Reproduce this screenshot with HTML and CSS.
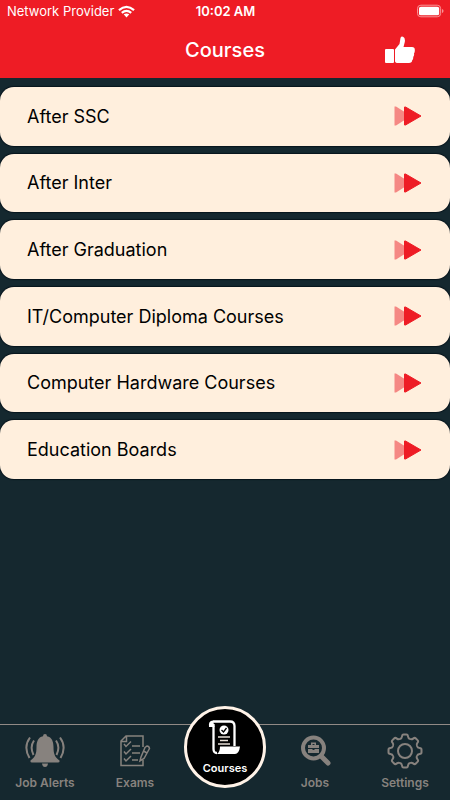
FILE: index.html
```html
<!DOCTYPE html>
<html lang="en">
<head>
<meta charset="utf-8">
<meta name="viewport" content="width=device-width, initial-scale=1">
<title>Courses</title>
<link rel="stylesheet" href="styles.css">
</head>
<body>
<svg class="defs" aria-hidden="true">
  <symbol id="forward" viewBox="0 0 28 20">
    <path d="M0.500 0.500H2L17 10 2 19.500H0.500z" fill="#f58884"/>
    <path d="M10.500 1H11.500L27 10 11.500 19H10.500z" fill="#ee1c25" stroke="#ee1c25" stroke-linejoin="round"/>
  </symbol>
</svg>
<header class="top">
  <div class="status">
    <div class="carrier">
      <span>Network Provider</span>
      <svg class="wifi" viewBox="0 0 18 13" aria-hidden="true">
        <g fill="none" stroke="#fff" stroke-width="2.300">
          <path d="M1 5Q9-2 17 5"/>
          <path d="M4 8Q9 3.500 14 8"/>
        </g>
        <path d="M6 9.500Q9 7.500 12 9.500L9 12.800z" fill="#fff"/>
      </svg>
    </div>
    <time class="clock">10:02 AM</time>
    <svg class="battery" viewBox="0 0 28 14" aria-hidden="true">
      <rect x="0.500" y="1" width="24" height="12" rx="3.500" fill="none" stroke="#f99a9c" />
      <rect x="2" y="2.500" width="21" height="9" rx="2" fill="#fff"/>
      <path d="M26 5q1.500.5 1.500 2T26 9z" fill="#f99a9c"/>
    </svg>
  </div>
  <div class="bar">
    <h1>Courses</h1>
    <button class="like" type="button" aria-label="Like">
      <svg viewBox="0 0 30 28" aria-hidden="true">
        <rect x="0" y="13" width="9" height="14" rx="1" fill="#fff"/>
        <path d="M10 13.500L14.500 8 15.500 2Q16-.3 18 .8 20.500 2 19.800 6L18.500 11H27Q30 11.300 29.800 14 30 16 29 17.500 29.500 19.500 28.200 21 28.500 23 27.200 24.300 27 27 24 27H13Q10 27 10 25z" fill="#fff"/>
      </svg>
    </button>
  </div>
</header>
<main>
  <ul class="courses">
    <li><a href="#ssc">After SSC<svg aria-hidden="true"><use href="#forward"/></svg></a></li>
    <li><a href="#inter">After Inter<svg aria-hidden="true"><use href="#forward"/></svg></a></li>
    <li><a href="#graduation">After Graduation<svg aria-hidden="true"><use href="#forward"/></svg></a></li>
    <li><a href="#diploma">IT/Computer Diploma Courses<svg aria-hidden="true"><use href="#forward"/></svg></a></li>
    <li><a href="#hardware">Computer Hardware Courses<svg aria-hidden="true"><use href="#forward"/></svg></a></li>
    <li><a href="#boards">Education Boards<svg aria-hidden="true"><use href="#forward"/></svg></a></li>
  </ul>
</main>
<nav class="tabs">
  <a href="#alerts">
    <svg viewBox="0 0 40 36" aria-hidden="true">
      <path d="M20 1Q22 1 22 3.200C27 4 28.500 9 28.500 14 28.500 21 30 24.500 34.500 27.500Q35 29.500 33 29.500H7Q5 29.500 5.500 27.500C10 24.500 11.500 21 11.500 14 11.500 9 13 4 18 3.200Q18 1 20 1zM17 30.500H23Q22.500 34 20 34T17 30.500z" fill="currentColor"/>
      <path d="M9 7.500Q4.500 14 8.500 22M5 4.500Q-2 14 4.500 25M31 7.500Q35.500 14 31.500 22M35 4.500Q42 14 35.500 25" fill="none" stroke="currentColor" stroke-width="2"/>
    </svg>
    <span>Job Alerts</span>
  </a>
  <a href="#exams">
    <svg viewBox="0 0 40 36" aria-hidden="true">
      <g fill="none" stroke="currentColor" stroke-width="1.500">
        <path d="M28 14V3H11L6 8V32.500H28V27M6 8.500H11.500V3"/>
        <path d="M9 11l2 2.500 5-5M9 18.500l2 2.500 5-5M9 25.500l2 2.500 5-5M17 13H25M17 20H25M17 27H23"/>
        <path d="M30 14.500L26 24 25 28 29 25.500 34.500 15.500Q34 13 32 13zM28.500 18L32 20"/>
      </g>
    </svg>
    <span>Exams</span>
  </a>
  <a class="current" href="#courses" aria-current="page">
    <svg viewBox="0 0 34 36" aria-hidden="true">
      <path d="M5 2.500H22Q26.500 2.500 26.500 7V27M5.500 5V30Q5.500 34 9 34" fill="none" stroke="#fff" stroke-width="2.300"/>
      <path d="M12 27.500H32Q31 35 27 35H9Q12 33 12 27.500zM1 8Q0 1.500 5 1.500L6.500 8z" fill="#fff"/>
      <circle cx="16" cy="11" r="4.500" fill="#fff"/>
      <path d="M13.500 11l2 2 3-4" fill="none" stroke="#000" stroke-width="1.300"/>
      <path d="M10 18H22M12 21.500H20M10 25H22" stroke="#e8e0d8" stroke-width="1.600"/>
    </svg>
    <span>Courses</span>
  </a>
  <a href="#jobs">
    <svg viewBox="0 0 40 36" aria-hidden="true">
      <circle cx="18.500" cy="15" r="10.500" fill="none" stroke="currentColor" stroke-width="4"/>
      <path d="M26 23L33 30" stroke="currentColor" stroke-width="5" stroke-linecap="round"/>
      <path d="M13 12H16V9.500H21V12H24V15H13zM13 16H17.500V17H19.500V16H24V20H13zM17.500 11V12H19.500V11z" fill="currentColor" fill-rule="evenodd"/>
    </svg>
    <span>Jobs</span>
  </a>
  <a href="#settings">
    <svg viewBox="-20 -18 40 36" aria-hidden="true">
      <g fill="none" stroke="currentColor" stroke-width="2">
        <circle r="7"/>
        <path id="tooth" d="M-5-12Q-3.200-12.600-3-14.500-2.800-16.500-1.500-16.500H1.500Q2.800-16.500 3-14.500 3.200-12.600 5-12"/>
        <use href="#tooth" transform="rotate(45)"/>
        <use href="#tooth" transform="rotate(90)"/>
        <use href="#tooth" transform="rotate(135)"/>
        <use href="#tooth" transform="rotate(180)"/>
        <use href="#tooth" transform="rotate(225)"/>
        <use href="#tooth" transform="rotate(270)"/>
        <use href="#tooth" transform="rotate(315)"/>
      </g>
    </svg>
    <span>Settings</span>
  </a>
</nav>
</body>
</html>
```
FILE: styles.css
```css
* {
  box-sizing: border-box;
}

body {
  margin: 0;
  min-height: 100vh;
  display: flex;
  flex-direction: column;
  background: #15282f;
  color: #000;
  font-family: Inter, "Liberation Sans", sans-serif;
}

svg {
  display: block;
}

a {
  color: inherit;
  text-decoration: none;
}

.defs {
  display: none;
}

.top {
  background: #ee1c25;
  color: #fff;
}

.status,
.bar {
  display: grid;
  grid-template-columns: 1fr auto 1fr;
  align-items: center;
}

.status {
  height: 22px;
  padding: 0 6px 0 7px;
  font-size: 13px;
}

.carrier {
  display: flex;
  align-items: center;
  gap: 4px;
}

.wifi {
  width: 17px;
  height: 13px;
}

.clock {
  font-weight: 600;
}

.battery {
  width: 27px;
  height: 14px;
  justify-self: end;
}

.bar {
  height: 56px;
  padding: 0 35px;
}

h1 {
  grid-column: 2;
  margin: 0;
  font-size: 20px;
  font-weight: 500;
}

.like {
  justify-self: end;
  padding: 0;
  border: 0;
  background: none;
}

.like svg {
  width: 30px;
  height: 28px;
}

main {
  flex: 1;
  padding-top: 9px;
}

.courses {
  display: grid;
  grid-auto-rows: 1fr;
  gap: 8px;
  min-height: 49vh;
  margin: 0;
  padding: 0;
  list-style: none;
}

.courses a {
  display: flex;
  align-items: center;
  justify-content: space-between;
  height: 100%;
  padding: 0 28px 0 27px;
  border-radius: 14px;
  background: #ffefdd;
  box-shadow: 0 0 1px 1px #07141c;
  font-size: 18px;
}

.courses svg {
  width: 28px;
  height: 20px;
}

.tabs {
  display: grid;
  grid-template-columns: repeat(5, 1fr);
  height: 76px;
  border-top: 1px solid #918a86;
  color: #87827e;
  font-size: 12px;
  line-height: 14px;
  font-weight: 600;
}

.tabs a {
  display: flex;
  flex-direction: column;
  align-items: center;
  gap: 7px;
  padding-top: 8px;
}

.tabs svg {
  width: 40px;
  height: 36px;
}

.tabs .current {
  justify-self: center;
  width: 82px;
  height: 82px;
  margin-top: -19px;
  padding-top: 10px;
  gap: 6px;
  border: 3px solid #fff3e8;
  border-radius: 50%;
  background: #000;
  color: #fff;
  font-size: 11px;
}

.tabs .current svg {
  width: 34px;
}
```
